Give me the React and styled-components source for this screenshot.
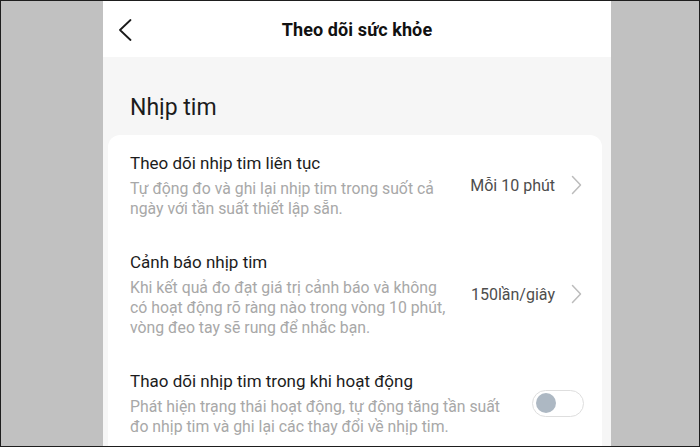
import React from 'react';
import styled, { createGlobalStyle } from 'styled-components';

const GlobalStyle = createGlobalStyle`
  * { box-sizing: border-box; }
  body {
    margin: 0;
    font-family: Roboto, "Noto Sans", "Liberation Sans", sans-serif;
  }
`;

const Frame = styled.div`
  width: 700px;
  height: 447px;
  border: 1px solid #1e1e1e;
  background: #c1c1c1;
  padding-left: 102px;
  overflow: hidden;
  display: flex;
`;

const Screen = styled.div`
  width: 508px;
  height: 100%;
  background: #f6f6f6;
  display: flex;
  flex-direction: column;
`;

const Header = styled.div`
  height: 56px;
  flex-shrink: 0;
  background: #fff;
  position: relative;
  display: flex;
  align-items: center;
  justify-content: center;
`;

const BackButton = styled.div`
  position: absolute;
  left: 15px;
  top: 18px;
  display: flex;
`;

const Title = styled.div`
  font-size: 18px;
  font-weight: 700;
  color: #111;
  letter-spacing: 0.1px;
`;

const SectionTitle = styled.div`
  font-size: 23px;
  line-height: 30px;
  color: #1c1c1c;
  padding: 36px 0 12px 27px;
`;

const Card = styled.div`
  margin: 0 9px 0 5px;
  background: #fff;
  border-radius: 12px;
  padding-bottom: 20px;
`;

const Row = styled.div`
  display: flex;
  align-items: center;
  justify-content: space-between;
  padding: 16px 20px 15px 22px;
`;

const TextCol = styled.div`
  flex: 1;
  min-width: 0;
`;

const RowTitle = styled.div`
  font-size: 17px;
  line-height: 24px;
  color: #1c1c1c;
`;

const RowDesc = styled.div`
  margin-top: 4px;
  font-size: 15.8px;
  line-height: 20px;
  color: #a8a8a8;
`;

const DescLine = styled.span`
  display: block;
  white-space: nowrap;
`;

const Value = styled.div`
  display: flex;
  align-items: center;
  gap: 16px;
  font-size: 16px;
  color: #4d4d4d;
  white-space: nowrap;
`;

const Toggle = styled.div`
  width: 52px;
  height: 27px;
  border: 1.5px solid #dedede;
  border-radius: 14px;
  background: #fff;
  display: flex;
  align-items: center;
  padding-left: 3px;
  flex-shrink: 0;
  margin-right: -2px;
`;

const Knob = styled.div`
  width: 20px;
  height: 20px;
  border-radius: 50%;
  background: #adb8c3;
`;

const Chevron = () => (
  <svg width="11" height="20" viewBox="0 0 11 20">
    <path d="M1.5 1.5 L9.5 10 L1.5 18.5" fill="none" stroke="#bcbcbc" strokeWidth="1.5" strokeLinecap="round" strokeLinejoin="round" />
  </svg>
);

const BackIcon = () => (
  <svg width="14" height="22" viewBox="0 0 14 22">
    <path d="M12.5 1 L2 11 L12.5 21" fill="none" stroke="#1a1a1a" strokeWidth="1.8" strokeLinecap="round" strokeLinejoin="round" />
  </svg>
);

const rows = [
  {
    title: 'Theo dõi nhịp tim liên tục',
    desc: [
      'Tự động đo và ghi lại nhịp tim trong suốt cả',
      'ngày với tần suất thiết lập sẵn.',
    ],
    value: 'Mỗi 10 phút',
  },
  {
    title: 'Cảnh báo nhịp tim',
    desc: [
      'Khi kết quả đo đạt giá trị cảnh báo và không',
      'có hoạt động rõ ràng nào trong vòng 10 phút,',
      'vòng đeo tay sẽ rung để nhắc bạn.',
    ],
    value: '150lần/giây',
  },
  {
    title: 'Thao dõi nhịp tim trong khi hoạt động',
    desc: [
      'Phát hiện trạng thái hoạt động, tự động tăng tần suất',
      'đo nhịp tim và ghi lại các thay đổi về nhịp tim.',
    ],
    toggle: true,
  },
];

export default function App() {
  return (
    <>
      <GlobalStyle />
      <Frame>
        <Screen>
          <Header>
            <BackButton>
              <BackIcon />
            </BackButton>
            <Title>Theo dõi sức khỏe</Title>
          </Header>
          <SectionTitle>Nhịp tim</SectionTitle>
          <Card>
            {rows.map((row) => (
              <Row key={row.title}>
                <TextCol>
                  <RowTitle>{row.title}</RowTitle>
                  <RowDesc>
                    {row.desc.map((line) => (
                      <DescLine key={line}>{line}</DescLine>
                    ))}
                  </RowDesc>
                </TextCol>
                {row.toggle ? (
                  <Toggle>
                    <Knob />
                  </Toggle>
                ) : (
                  <Value>
                    {row.value}
                    <Chevron />
                  </Value>
                )}
              </Row>
            ))}
          </Card>
        </Screen>
      </Frame>
    </>
  );
}
